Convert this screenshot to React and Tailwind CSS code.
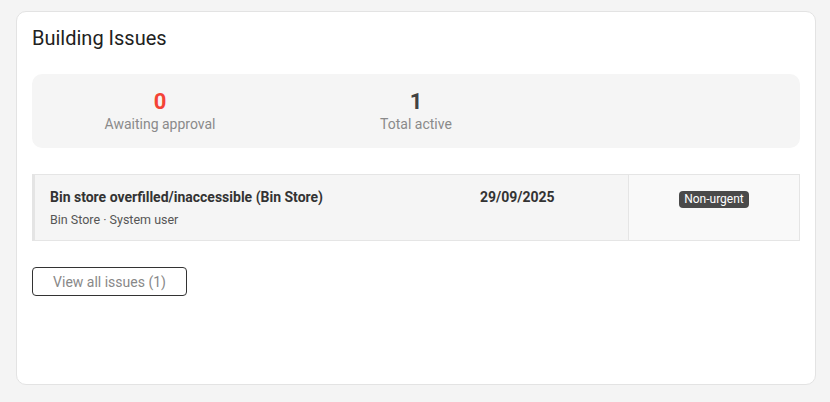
import React from 'react';

const stats = [
  { value: '0', label: 'Awaiting approval', color: 'text-[#f44336]' },
  { value: '1', label: 'Total active', color: 'text-[#424242]' },
];

const issues = [
  {
    title: 'Bin store overfilled/inaccessible (Bin Store)',
    meta: 'Bin Store · System user',
    date: '29/09/2025',
    priority: 'Non-urgent',
  },
];

export default function App() {
  return (
    <div className="min-h-screen bg-[#f4f4f4] pt-[11px] pl-4 pr-[14px] font-['Roboto',sans-serif]">
      <div className="h-[374px] bg-white border border-[#e3e3e3] rounded-[10px] px-[15px] pt-3">
        <h2 className="text-[20px] leading-7 text-[#212121]">Building Issues</h2>

        {/* stats */}
        <div className="mt-[22px] grid grid-cols-3 bg-[#f5f5f5] rounded-[10px] pt-[15px] pb-[14px]">
          {stats.map((s) => (
            <div key={s.label} className="flex flex-col items-center">
              <span className={`text-[22px] leading-[25px] font-bold ${s.color}`}>{s.value}</span>
              <span className="text-sm leading-5 text-[#8a8a8a]">{s.label}</span>
            </div>
          ))}
        </div>

        {/* issues */}
        <div className="mt-[26px]">
          {issues.map((it) => (
            <div key={it.title} className="flex border border-[#e5e5e5] border-l-[3px] border-l-[#e4e4e4] bg-[#f5f5f5]">
              <div className="flex-1 pl-[15px] pt-3 pb-3">
                <div className="text-sm leading-5 font-bold text-[#333]">{it.title}</div>
                <div className="mt-1 text-[12.5px] leading-[17px] text-[#555]">{it.meta}</div>
              </div>
              <div className="w-[164px] pl-4 pt-3">
                <div className="text-sm leading-5 font-bold text-[#333]">{it.date}</div>
              </div>
              <div className="w-[171px] border-l border-[#e5e5e5] bg-[#f9f9f9] flex justify-center items-start pt-4">
                <span className="bg-[#4a4a4a] text-white text-xs leading-[17px] rounded-[4px] px-[5px]">{it.priority}</span>
              </div>
            </div>
          ))}
        </div>

        <button className="mt-[26px] w-[155px] h-[29px] border border-[#333] rounded-[4px] text-sm text-[#888] bg-white">
          View all issues (1)
        </button>
      </div>
    </div>
  );
}
